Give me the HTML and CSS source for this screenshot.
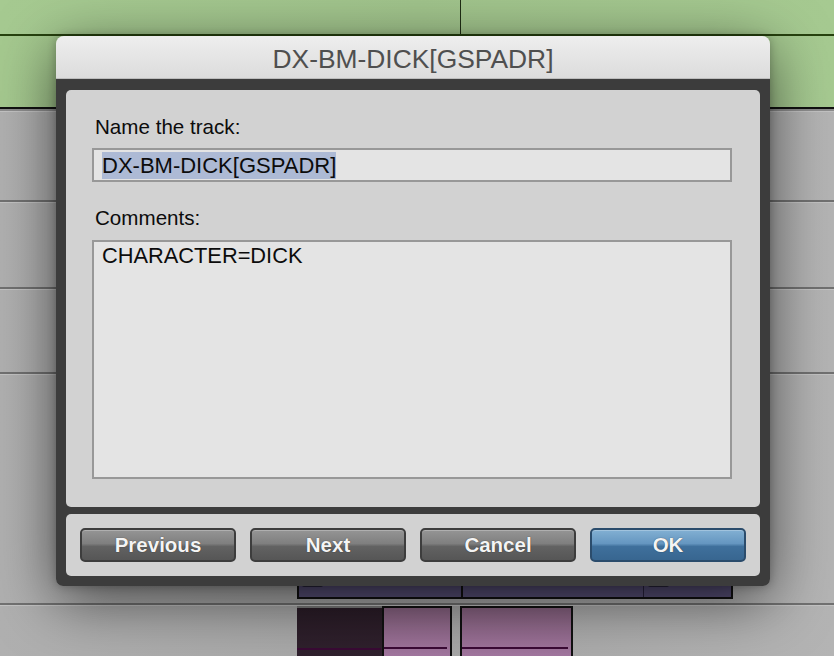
FILE: index.html
```html
<!DOCTYPE html>
<html>
<head>
<meta charset="utf-8">
<link rel="stylesheet" href="styles.css">
</head>
<body>
<div class="daw">
  <div class="row green-top"><div class="bar-line"></div></div>
  <div class="row green"></div>
  <div class="row gray r1"></div>
  <div class="row gray r2"></div>
  <div class="row gray r3"></div>
  <div class="row gray r4">
    <div class="clip purple">
      <span class="clip-icon icon-a"></span>
      <span class="clip-div div-a"></span>
      <span class="clip-div div-b"></span>
      <span class="clip-icon icon-b"></span>
    </div>
  </div>
  <div class="row gray r5">
    <div class="clip dark"><span class="clip-line"></span></div>
    <div class="clip pink pink-a"><span class="clip-line"></span></div>
    <div class="clip pink pink-b"><span class="clip-line"></span></div>
  </div>
</div>

<div class="dialog">
  <div class="titlebar">DX-BM-DICK[GSPADR]</div>
  <div class="frame">
    <div class="panel form">
      <div class="label">Name the track:</div>
      <div class="field"><span class="sel">DX-BM-DICK[GSPADR]</span></div>
      <div class="label label-comments">Comments:</div>
      <div class="textarea">CHARACTER=DICK</div>
    </div>
    <div class="panel buttons">
      <button class="btn">Previous</button>
      <button class="btn">Next</button>
      <button class="btn">Cancel</button>
      <button class="btn btn-ok">OK</button>
    </div>
  </div>
</div>
</body>
</html>
```

FILE: styles.css
```css
* { box-sizing: border-box; }

html, body {
  margin: 0;
  padding: 0;
}

body {
  width: 834px;
  height: 656px;
  overflow: hidden;
  position: relative;
  font-family: "Liberation Sans", Arial, sans-serif;
  background: #a9a9a9;
}

.daw {
  display: flex;
  flex-direction: column;
  width: 834px;
  height: 656px;
}

.row {
  position: relative;
  flex: none;
}

.green-top {
  height: 36px;
  background: linear-gradient(to right, #a6ca91, #a1c48c 50%, #a6ca91);
  border-bottom: 2px solid #27420f;
}

.bar-line {
  position: absolute;
  left: 460px;
  top: 0;
  width: 1px;
  height: 34px;
  background: #1f2d14;
}

.green {
  height: 73px;
  background: linear-gradient(to right, #a5c98f, #9fc28a 50%, #a6ca91);
  border-bottom: 2px solid #111;
}

.gray {
  background:
    linear-gradient(#c3c3c3 0 1px, transparent 1px),
    linear-gradient(to right, #b0b0b0, #a6a6a6 50%, #b4b4b4);
  border-bottom: 2px solid #717171;
}

.r1 { height: 93px; border-top: 2px solid #8e8e8e; }
.r2 { height: 87px; }
.r3 { height: 85px; }
.r4 { height: 231px; }
.r5 { height: 60px; border-bottom: 0; }

.clip {
  position: absolute;
}

.purple {
  left: 297px;
  bottom: 4px;
  width: 436px;
  height: 26px;
  background: #585078;
  border: 2px solid #111;
  border-top: 0;
}

.clip-div {
  position: absolute;
  top: 0;
  bottom: 0;
  width: 1px;
}

.div-a { left: 162px; background: #111; width: 2px; }
.div-b { left: 344px; background: #2a2440; }

.clip-icon {
  position: absolute;
  top: 2px;
  width: 21px;
  height: 12px;
  border-radius: 2px;
  background: #2b2740;
}

.icon-a { left: 3px; }
.icon-b { left: 349px; }

.dark {
  left: 297px;
  top: 1px;
  width: 85px;
  height: 60px;
  background: linear-gradient(#2a1c27, #31222f);
  border-top: 2px solid #7b7b7b;
}

.pink {
  top: 1px;
  height: 60px;
  border: 2px solid #111;
  background: linear-gradient(#86617f, #a77aa5);
}

.pink-a { left: 382px; width: 70px; }
.pink-b { left: 460px; width: 113px; }

.clip-line {
  position: absolute;
  left: 0;
  right: 3px;
  top: 39px;
  height: 2px;
  background: #3a0a35;
}

.dark .clip-line { top: 40px; right: 1px; }

/* Dialog */
.dialog {
  position: absolute;
  left: 56px;
  top: 36px;
  width: 714px;
  height: 550px;
  display: flex;
  flex-direction: column;
  border-radius: 8px 8px 7px 7px;
  box-shadow: 0 14px 60px rgba(0, 0, 0, 0.6), 0 0 8px rgba(0, 0, 0, 0.25);
}

.titlebar {
  height: 43px;
  padding-top: 8px;
  line-height: 30px;
  text-align: center;
  font-size: 26.4px;
  color: #4f4f4f;
  background: linear-gradient(#eeeeee, #dcdcdc);
  border-bottom: 1px solid #bdbdbd;
  border-radius: 8px 8px 0 0;
}

.frame {
  flex: 1;
  display: flex;
  flex-direction: column;
  gap: 7px;
  padding: 11px 10px 10px;
  background: #3c3c3c;
  border-radius: 0 0 7px 7px;
}

.panel {
  background: #d2d2d2;
  border-radius: 5px;
}

.form {
  height: 417px;
  display: flex;
  flex-direction: column;
  padding: 25px 28px 28px 26px;
}

.label {
  height: 24px;
  padding-left: 3px;
  line-height: 24px;
  font-size: 20.6px;
  color: #0c0c0c;
}

.label-comments { margin-top: 24px; }

.field {
  margin-top: 9px;
  height: 34px;
  border: 2px solid #989898;
  background: #e4e4e4;
  padding: 0 8px;
  display: flex;
  align-items: center;
}

.sel {
  font-size: 22px;
  line-height: 27px;
  color: #0c0c0c;
  background: #adbad5;
}

.textarea {
  margin-top: 10px;
  height: 239px;
  border: 2px solid #989898;
  background: #e4e4e4;
  padding: 2px 8px;
  font-size: 21.8px;
  line-height: 24px;
  color: #0c0c0c;
}

.buttons {
  height: 62px;
  display: flex;
  gap: 14px;
  padding: 14px;
}

.btn {
  width: 156px;
  height: 34px;
  padding: 0;
  border: 2px solid #3d3d3d;
  border-radius: 5px;
  font-family: "Liberation Sans", Arial, sans-serif;
  font-weight: bold;
  font-size: 20.5px;
  color: #f4f4f4;
  text-shadow: 0 0 1px rgba(0, 0, 0, 0.7);
  background: linear-gradient(#959595 0%, #7f7f7f 45%, #626262 55%, #565656 100%);
  box-shadow: inset 0 1px 0 rgba(255, 255, 255, 0.25);
}

.btn-ok {
  border-color: #2b4c6c;
  background: linear-gradient(#82b0d3 0%, #6596c0 45%, #3f709c 55%, #386690 100%);
}
```
